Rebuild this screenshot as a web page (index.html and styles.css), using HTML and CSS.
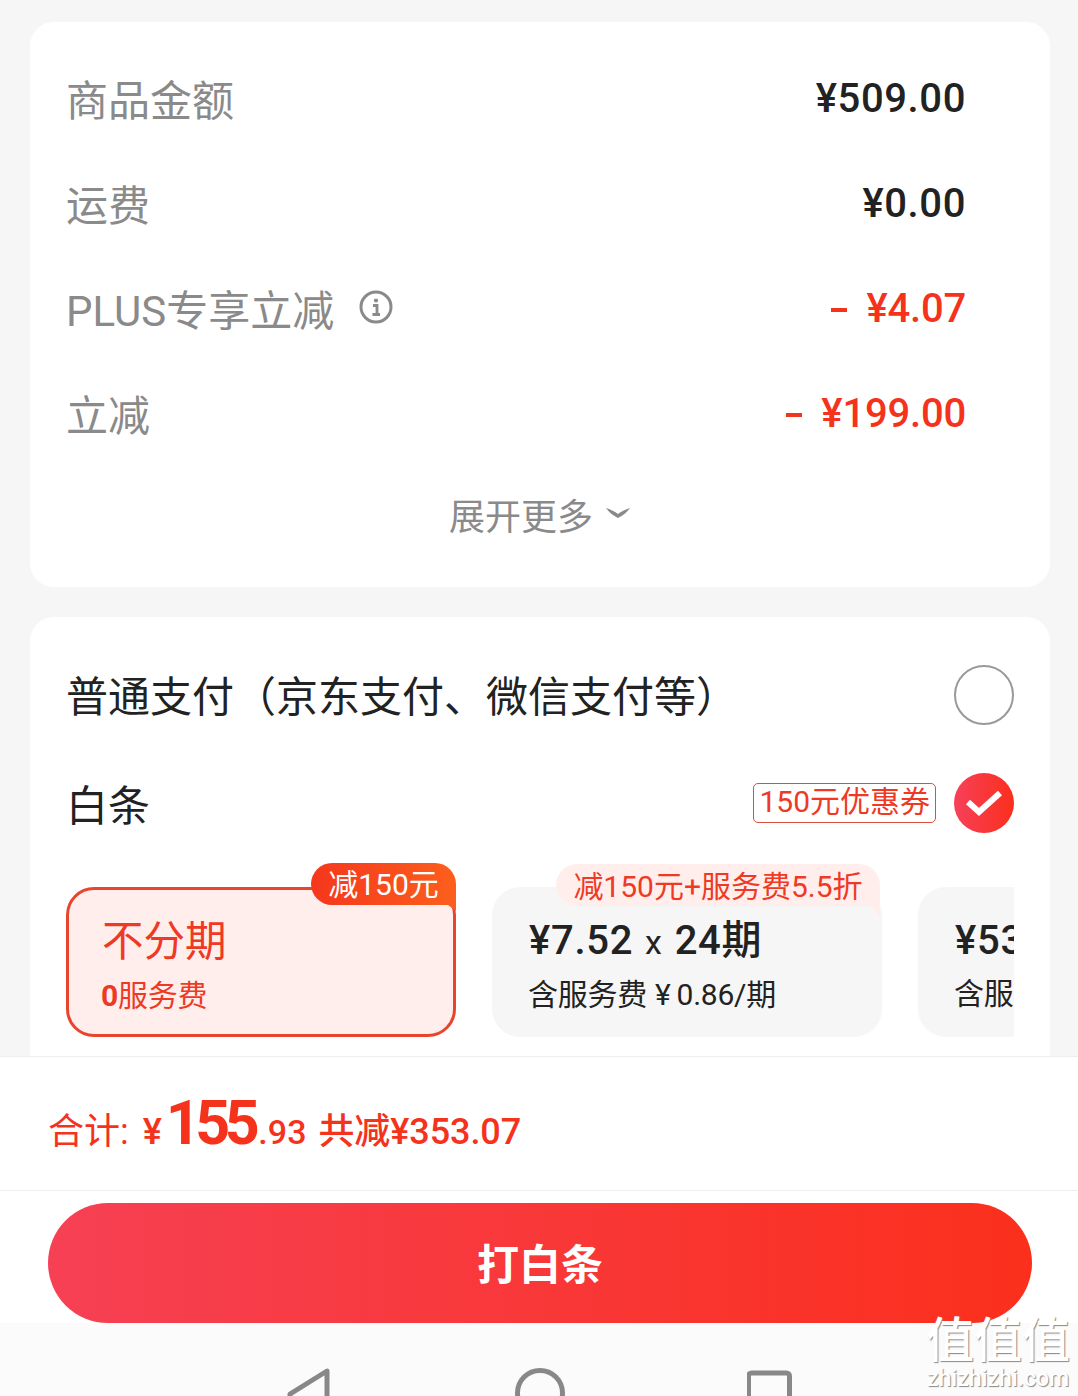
FILE: index.html
```html
<!DOCTYPE html>
<html lang="zh-CN">
<head>
  <meta charset="UTF-8" />
  <meta name="viewport" content="width=device-width, initial-scale=1.0"/>
  <title>订单结算</title>
  <link rel="stylesheet" href="styles.css">
</head>
<body>
<div class="page">
  <main class="main">
    <!-- price summary -->
    <section class="card summary">
      <div class="row"><span class="label">商品金额</span><span class="amount">¥509.00</span></div>
      <div class="row"><span class="label">运费</span><span class="amount">¥0.00</span></div>
      <div class="row">
        <span class="label">PLUS专享立减
          <svg class="info" width="34" height="34" viewBox="0 0 34 34">
            <circle cx="17" cy="17" r="15" fill="none" stroke="#8a8a8a" stroke-width="3"/>
            <circle cx="17" cy="10.5" r="2.1" fill="#8a8a8a"/>
            <path d="M14 15.5h4v9.500M13.500 24.500h7.500" fill="none" stroke="#8a8a8a" stroke-width="2.800"/>
          </svg>
        </span>
        <span class="amount red"><span class="minus"></span>¥4.07</span>
      </div>
      <div class="row"><span class="label">立减</span><span class="amount red"><span class="minus"></span>¥199.00</span></div>
      <div class="expand">展开更多
        <svg width="26" height="14" viewBox="0 0 26 14"><path d="M1 3c5 1.500 9 3.500 12 6 3-2.500 7-4.500 12-6-3 4.500-7 7.500-12 10C8 10.500 4 7.500 1 3z" fill="#8a8a8a"/></svg>
      </div>
    </section>

    <!-- payment methods -->
    <section class="card payment">
      <div class="pay-row">
        <span class="pay-name">普通支付（京东支付、微信支付等）</span>
        <span class="radio"></span>
      </div>
      <div class="pay-row baitiao">
        <span class="pay-name">白条</span>
        <span class="coupon">150元优惠券</span>
        <span class="radio checked">
          <svg width="38" height="30" viewBox="0 0 38 30"><path d="M3 14l11 10L35 5" fill="none" stroke="#fff" stroke-width="6"/></svg>
        </span>
      </div>
      <div class="plans">
        <div class="plan active">
          <span class="tag tag-hot">减150元</span>
          <div class="plan-title">不分期</div>
          <div class="plan-sub"><b>0</b>服务费</div>
        </div>
        <div class="plan">
          <span class="tag tag-soft">减150元+服务费5.5折</span>
          <div class="plan-title">¥7.52<span class="times">x</span>24期</div>
          <div class="plan-sub">含服务费<span class="yen">¥</span>0.86/期</div>
        </div>
        <div class="plan">
          <div class="plan-title">¥53.19</div>
          <div class="plan-sub">含服务费</div>
        </div>
      </div>
    </section>
  </main>

  <footer class="footer">
    <div class="total">
      <span class="total-label">合计:</span>
      <span class="total-yen">¥</span><span class="total-big">155</span><span class="total-cents">.93</span>
      <span class="total-saved">共减¥353.07</span>
    </div>
    <div class="btn-wrap"><button class="pay-btn">打白条</button></div>
  </footer>

  <nav class="sysnav">
    <svg width="48" height="60" viewBox="0 0 48 60"><path d="M42 3L5 26v8l37 24z" fill="none" stroke="#888" stroke-width="5" stroke-linejoin="round"/></svg>
    <svg width="50" height="60" viewBox="0 0 50 60"><circle cx="25" cy="25" r="22.500" fill="none" stroke="#888" stroke-width="5"/></svg>
    <svg width="46" height="60" viewBox="0 0 46 60"><rect x="1.500" y="5" width="41" height="50" rx="3" fill="none" stroke="#888" stroke-width="5"/></svg>
  </nav>

  <div class="watermark">
    <div class="wm-big">值值值</div>
    <div class="wm-small">zhizhizhi.com</div>
  </div>
</div>
</body>
</html>
```

FILE: styles.css
```css
* {
  box-sizing: border-box;
}

body {
  margin: 0;
  padding: 0;
  font-family: Roboto, "Noto Sans CJK SC", sans-serif;
  background-color: #f6f6f6;
}

.page {
  position: relative;
  width: 1078px;
  height: 1396px;
  overflow: hidden;
}

.main {
  height: 1056px;
  padding: 22px 28px 0 30px;
  overflow: hidden;
}

.card {
  background: #fff;
  border-radius: 24px;
}

/* summary */
.summary {
  height: 565px;
  margin-bottom: 30px;
  padding-top: 26px;
}

.row {
  display: flex;
  align-items: center;
  justify-content: space-between;
  height: 105px;
  padding: 0 84px 0 37px;
}

.label {
  display: flex;
  align-items: center;
  margin-top: -6px;
  margin-left: -1px;
  font-size: 42px;
  color: #8a8a8a;
}

.info {
  margin-left: 25px;
  margin-top: -2px;
}

.amount {
  display: flex;
  align-items: center;
  font-size: 40px;
  font-weight: 500;
  letter-spacing: 0.6px;
  color: #222;
  margin-top: -4px;
}

.red {
  color: #f5321c;
  letter-spacing: -0.2px;
}

.minus {
  width: 16px;
  height: 4px;
  margin-right: 19px;
  margin-top: 2px;
  background: #f5321c;
}

.expand {
  display: flex;
  align-items: center;
  justify-content: center;
  gap: 12px;
  height: 92px;
  font-size: 36px;
  color: #8a8a8a;
}

.expand svg {
  margin-top: -4px;
}

/* payment */
.payment {
  height: 600px;
  padding: 24px 36px 0 36px;
}

.pay-row {
  display: flex;
  align-items: center;
  height: 108px;
}

.pay-name {
  flex: 1;
  margin-top: -3px;
  font-size: 42px;
  color: #222;
}

.baitiao .pay-name {
  margin-top: -2px;
}

.radio {
  display: flex;
  align-items: center;
  justify-content: center;
  width: 60px;
  height: 60px;
  border: 2px solid #999;
  border-radius: 50%;
}

.radio.checked {
  border: 0;
  background: linear-gradient(90deg, #f7405a, #fb2f1c);
}

.coupon {
  height: 40px;
  line-height: 36px;
  margin-right: 18px;
  padding: 0 5px;
  border: 1px solid #d9503c;
  border-radius: 5px;
  font-size: 30px;
  color: #ee3a24;
}

.plans {
  display: flex;
  gap: 36px;
  overflow: hidden;
  margin-top: 6px;
  padding-top: 24px;
  height: 174px;
}

.plan {
  position: relative;
  flex: 0 0 390px;
  height: 150px;
  padding: 30px 36px 0;
  background: #f6f6f6;
  border-radius: 28px;
}

.plan.active {
  padding: 27px 33px 0;
  background: #ffeeec;
  border: 3px solid #e8452f;
}

.plan-title {
  font-size: 40px;
  font-weight: 500;
  line-height: 48px;
  letter-spacing: 0.7px;
  margin-left: 1px;
  color: #222;
}

.plan-sub {
  margin-top: 8px;
  font-size: 30px;
  line-height: 42px;
  letter-spacing: -0.25px;
  color: #222;
}

.active .plan-title {
  margin-top: 1px;
  margin-left: 0;
  font-weight: 400;
  font-size: 41.500px;
  letter-spacing: 0;
  color: #ee3a24;
}

.active .plan-sub {
  color: #ee3a24;
  margin-left: -1px;
  margin-top: 9px;
}

.active .plan-sub b {
  font-weight: 700;
}

.times {
  margin: 0 12px;
  font-size: 34px;
  font-weight: 400;
}

.yen {
  margin: 0 6px 0 8px;
}

/* badges sitting on the plan's top edge */
.tag {
  position: absolute;
  top: -23px;
  right: 2px;
  height: 42px;
  line-height: 46px;
  font-size: 30px;
  white-space: nowrap;
  letter-spacing: 0;
  border-radius: 22px 22px 0 22px;
}

/* little fold under the badge's right end */
.tag::after {
  content: "";
  position: absolute;
  top: 100%;
  right: 0;
  width: 9px;
  height: 12px;
  clip-path: polygon(0 0, 100% 0, 100% 100%);
}

.tag-hot {
  top: -27px;
  right: -3px;
  width: 145px;
  line-height: 44px;
  text-align: center;
  color: #fff;
  background: linear-gradient(90deg, #f5371c, #fc5f1c);
}

.tag-hot::after {
  width: 8px;
  height: 6px;
  background: #fc5f1c;
}

.tag-soft {
  width: 324px;
  text-align: center;
  color: #ee3a24;
  background: #ffeeec;
}

.tag-soft::after {
  background: #ffeeec;
}

/* footer */
.footer {
  height: 267px;
  background: #fff;
  border-top: 1px solid #eee;
}

.total {
  display: flex;
  align-items: baseline;
  height: 134px;
  padding: 30px 0 0 48px;
  border-bottom: 1px solid #eee;
  color: #f5321c;
}

.total-label {
  font-size: 36px;
}

.total-yen {
  margin-left: 14px;
  font-size: 36px;
  font-weight: 500;
}

.total-big {
  margin-left: 4px;
  font-size: 61px;
  font-weight: 700;
  letter-spacing: -5.5px;
}

.total-cents {
  margin-left: 4px;
  font-size: 34px;
  font-weight: 500;
}

.total-saved {
  margin-left: 12px;
  font-size: 36px;
  font-weight: 500;
  letter-spacing: -0.1px;
}

.btn-wrap {
  padding: 12px 46px 0 48px;
}

.pay-btn {
  display: block;
  width: 984px;
  height: 120px;
  padding-bottom: 4px;
  border: 0;
  border-radius: 60px;
  font-family: inherit;
  font-size: 42px;
  font-weight: 700;
  color: #fff;
  background: linear-gradient(90deg, #f64054, #fb2f1c);
}

/* android nav bar, cut off by the screenshot */
.sysnav {
  display: flex;
  justify-content: center;
  gap: 182px;
  height: 73px;
  padding-top: 45px;
  background: #fbfbfb;
}

.watermark {
  position: absolute;
  right: 8px;
  bottom: 4px;
  text-align: center;
  color: #fff;
  text-shadow: 1px 1px 1px #888;
}

.wm-big {
  font-size: 48px;
  line-height: 50px;
  font-weight: 500;
}

.wm-small {
  font-size: 23px;
  line-height: 26px;
  font-weight: 500;
}
```
